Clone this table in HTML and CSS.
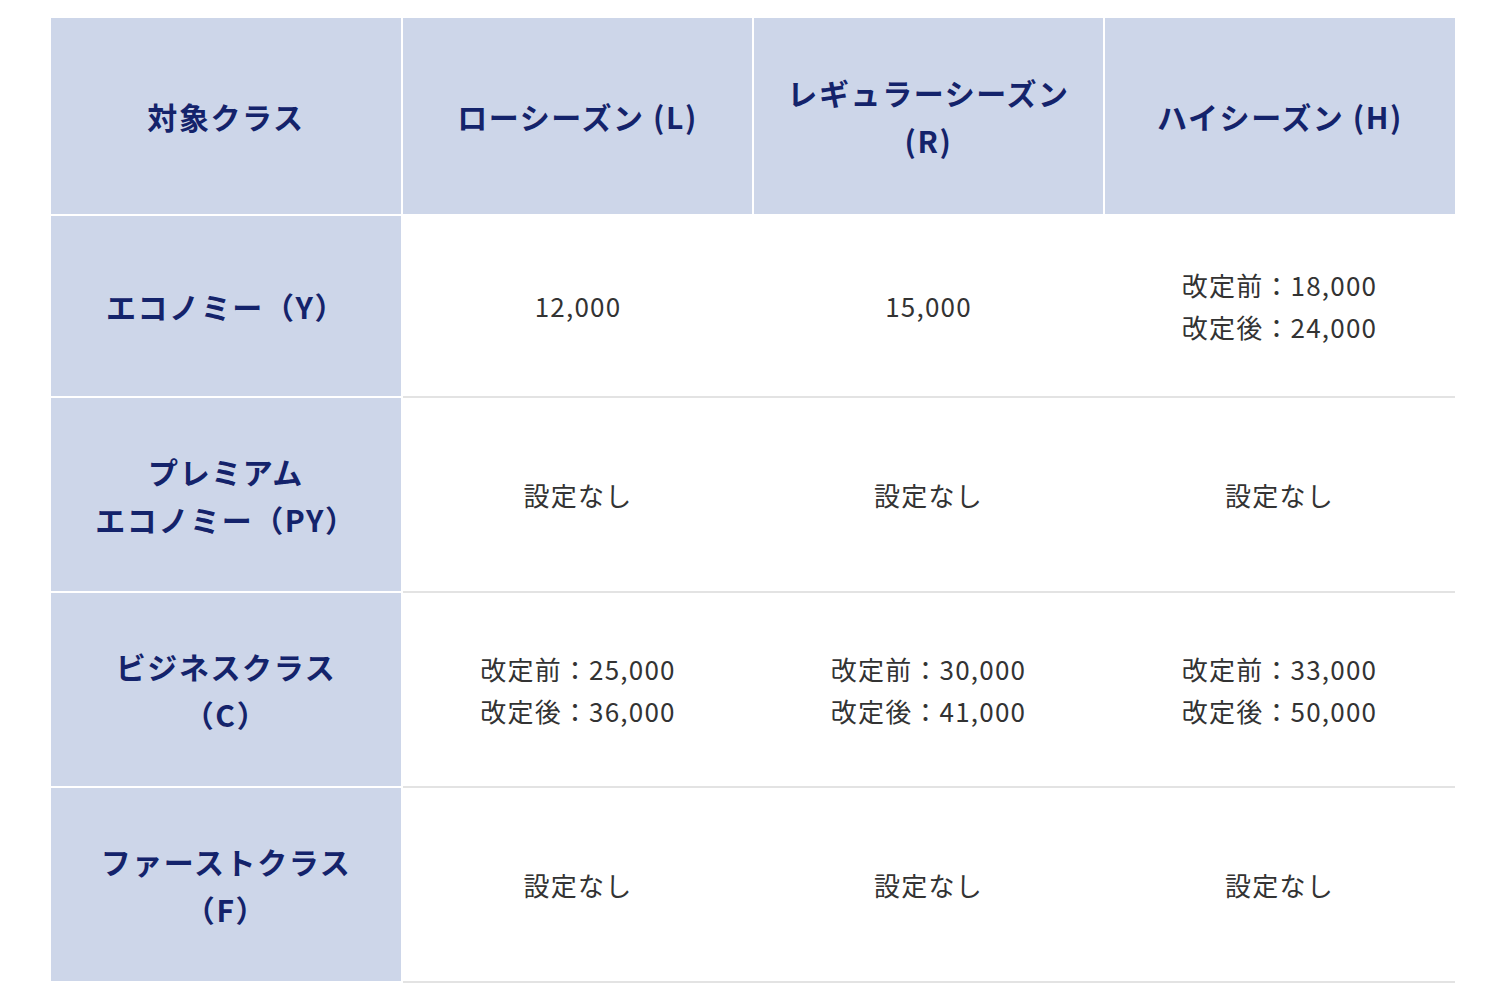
FILE: index.html
```html
<!DOCTYPE html>
<html lang="ja">
<head>
<meta charset="utf-8">
<link rel="stylesheet" href="styles.css">
</head>
<body>
<table class="fare">
  <thead>
    <tr class="row-head">
      <th>対象クラス</th>
      <th>ローシーズン (L)</th>
      <th>レギュラーシーズン<br>(R)</th>
      <th>ハイシーズン (H)</th>
    </tr>
  </thead>
  <tbody>
    <tr class="row-short">
      <th>エコノミー（Y）</th>
      <td>12,000</td>
      <td>15,000</td>
      <td>改定前：18,000<br>改定後：24,000</td>
    </tr>
    <tr class="row-tall">
      <th>プレミアム<br>エコノミー（PY）</th>
      <td>設定なし</td>
      <td>設定なし</td>
      <td>設定なし</td>
    </tr>
    <tr class="row-tall">
      <th>ビジネスクラス<br>（C）</th>
      <td>改定前：25,000<br>改定後：36,000</td>
      <td>改定前：30,000<br>改定後：41,000</td>
      <td>改定前：33,000<br>改定後：50,000</td>
    </tr>
    <tr class="row-tall">
      <th>ファーストクラス<br>（F）</th>
      <td>設定なし</td>
      <td>設定なし</td>
      <td>設定なし</td>
    </tr>
  </tbody>
</table>
</body>
</html>
```

FILE: styles.css
```css
html, body {
  margin: 0;
  padding: 0;
  background: #ffffff;
}

body {
  font-family: "Noto Sans CJK JP", "Noto Sans", sans-serif;
  padding: 18px 0 0 51px;
}

.fare {
  border-collapse: collapse;
  width: 1404px;
  table-layout: fixed;
}

.fare th,
.fare td {
  text-align: center;
  vertical-align: middle;
  padding: 0 10px;
}

.fare th {
  background: #cdd6e9;
  color: #14236b;
  font-weight: 700;
  font-size: 30px;
  letter-spacing: 1.6px;
  line-height: 48px;
  border: 2px solid #ffffff;
}

.fare td {
  color: #333333;
  font-size: 26px;
  letter-spacing: 1.2px;
  line-height: 42px;
  border-bottom: 2px solid #e3e3e3;
}

.fare thead th {
  border-top: none;
}

.fare tr > :first-child {
  border-left: none;
}

.fare tr > :last-child {
  border-right: none;
}

.row-head {
  height: 197px;
}

.row-short {
  height: 182px;
}

.row-tall {
  height: 195px;
}
```
